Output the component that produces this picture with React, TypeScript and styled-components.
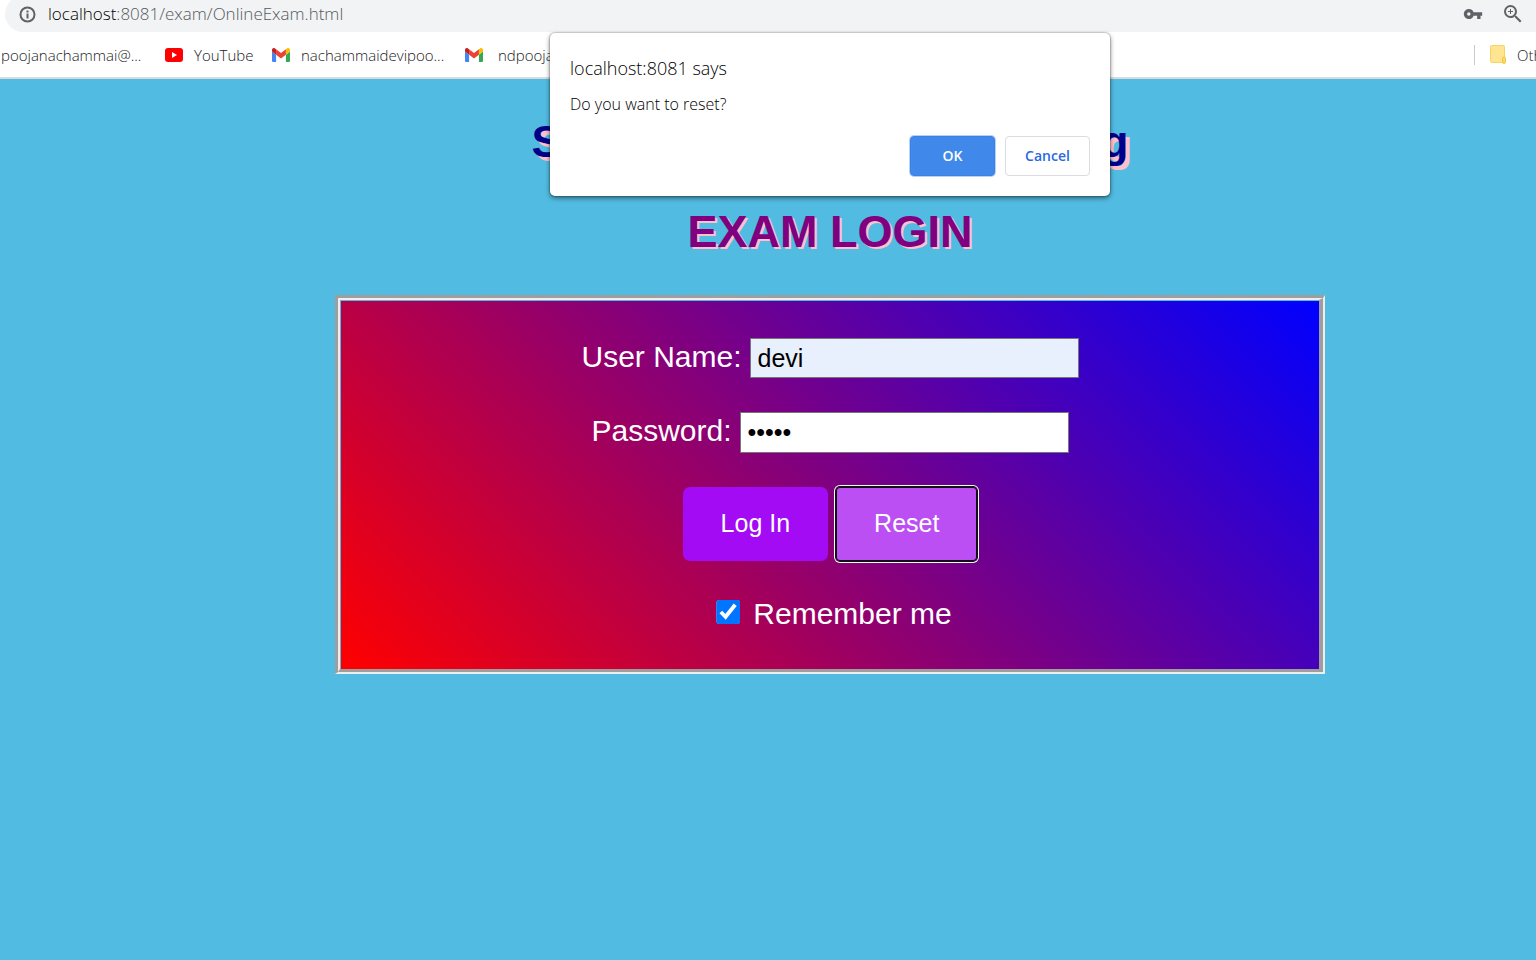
import React from "react";
import styled, { createGlobalStyle } from "styled-components";
import { MdVpnKey, MdZoomIn } from "react-icons/md";

const GlobalStyle = createGlobalStyle`
  * { box-sizing: border-box; }
  html, body, #root { height: 100%; }
  body { margin: 0; overflow: hidden; font-family: "Liberation Sans", Arial, sans-serif; }
`;

const chromeFont = `"Open Sans", "Noto Sans", sans-serif`;

const Window = styled.div`
  position: relative;
  min-height: 100%;
  display: flex;
  flex-direction: column;
  overflow: hidden;
  background: #fff;
`;

const AddressBar = styled.header`
  display: flex;
  align-items: center;
  height: 36px;
  margin: -4px 0 0 5px;
  padding: 0 11px 0 13px;
  border-radius: 18px 0 0 18px;
  background: #f1f3f4;
  color: #5f6368;
  font: 300 17px/20px ${chromeFont};
`;

const Url = styled.span`
  flex: 1;
  margin-left: 10px;
  color: #55595e;
  b { font-weight: 300; color: #000; }
`;

const IconButton = styled.button`
  display: flex;
  padding: 0;
  border: 0;
  background: none;
  color: #5f6368;
  & + & { margin-left: 18px; }
`;

const BookmarksBar = styled.nav`
  display: flex;
  align-items: center;
  height: 47px;
  padding-left: 1px;
  border-bottom: 2px solid #d8dadd;
  white-space: nowrap;
`;

const Bookmark = styled.a<{ $width: number; $gap?: number }>`
  display: flex;
  align-items: center;
  flex: none;
  gap: ${(p) => p.$gap ?? 11}px;
  width: ${(p) => p.$width}px;
  color: #202124;
  font: 300 15px/20px ${chromeFont};
  text-decoration: none;
  svg { flex: none; }
`;

const OtherBookmarks = styled.div`
  display: flex;
  flex: none;
  width: 62px;
  height: 20px;
  margin-left: auto;
  padding-left: 15px;
  border-left: 1px solid #c8cacd;
  overflow: hidden;
`;

const Page = styled.main`
  flex: 1;
  display: flex;
  flex-direction: column;
  align-items: center;
  padding: 37px 0 0 124px;
  background: #52bbe1;
`;

const Title = styled.h1`
  display: flex;
  justify-content: space-between;
  width: 597px;
  margin: 0;
  color: darkblue;
  font-size: 45px;
  line-height: 52px;
  text-shadow: 4px 4px pink;
`;

const Subtitle = styled.h2`
  margin: 38px 0 0;
  color: purple;
  font-size: 45px;
  line-height: 52px;
  text-shadow: 2px 2px pink;
`;

const Frame = styled.div`
  align-self: stretch;
  margin: 37px 211px 0;
  border: solid;
  border-width: 3px 2px 2px 3px;
  border-color: #9e9e9e #eee #eee #9e9e9e;
`;

const FrameInner = styled.div`
  padding: 1px 0 0 1px;
  border: solid;
  border-width: 2px 4px 3px 2px;
  border-color: #eee #9e9e9e #9e9e9e #eee;
`;

const LoginForm = styled.form`
  display: flex;
  flex-direction: column;
  align-items: center;
  padding: 37px 0 38px;
  background: linear-gradient(45deg, red, blue);
  color: #fff;
  font-size: 30px;
  line-height: 34px;
`;

const Field = styled.div`
  display: flex;
  gap: 8px;
  margin-bottom: 34px;
`;

const FieldLabel = styled.label`
  margin-top: 2px;
`;

const TextInput = styled.input<{ $filled?: boolean }>`
  width: 329px;
  height: ${(p) => (p.$filled ? 40 : 41)}px;
  padding: 0 7px;
  border: 1px solid #767676;
  background: ${(p) => (p.$filled ? "#e8f0fe" : "#fff")};
  color: #000;
  font: 25px "Liberation Sans", Arial, sans-serif;
  outline: 0;
`;

const Buttons = styled.div`
  display: flex;
  gap: 8px;
`;

const FormButton = styled.button<{ $focused?: boolean }>`
  height: 74px;
  padding: 0 38px 2px;
  border: 0;
  border-radius: ${(p) => (p.$focused ? 4 : 7)}px;
  background: ${(p) => (p.$focused ? "#bb4ff3" : "#a20bf3")};
  box-shadow: ${(p) =>
    p.$focused ? "inset 0 0 0 1px #101010, 0 0 0 1px #101010, 0 0 0 2px #fff" : "none"};
  color: #fff;
  font: 25px "Liberation Sans", Arial, sans-serif;
`;

const Remember = styled.label`
  display: flex;
  align-items: flex-start;
  gap: 13px;
  margin: 36px 0 0 8px;
`;

const Checkbox = styled.input`
  width: 24px;
  height: 24px;
  margin: 3px 0 0;
  accent-color: #0075ff;
  clip-path: inset(0 round 3px);
`;

const DialogLayer = styled.div`
  position: absolute;
  top: 33px;
  left: 124px;
  right: 0;
  display: flex;
  justify-content: center;
`;

const Dialog = styled.section`
  width: 560px;
  padding: 23px 20px 20px;
  border-radius: 5px;
  background: #fff;
  box-shadow: 0 0 1px 1px rgba(0, 0, 0, 0.16), 0 2px 5px rgba(0, 0, 0, 0.5);
  color: #000;
  font-family: ${chromeFont};
  font-weight: 300;
`;

const DialogTitle = styled.h2`
  margin: 0 0 13px;
  font-size: 18px;
  font-weight: 300;
  line-height: 24px;
`;

const DialogText = styled.p`
  margin: 0 0 21px;
  font-size: 16px;
  line-height: 22px;
`;

const DialogActions = styled.div`
  display: flex;
  justify-content: flex-end;
  gap: 10px;
`;

const DialogButton = styled.button<{ $primary?: boolean }>`
  width: 85px;
  height: 40px;
  padding: 0;
  border: 1px solid ${(p) => (p.$primary ? "#3b82e4" : "#dadce0")};
  border-radius: 4px;
  background: ${(p) => (p.$primary ? "#4089ea" : "#fff")};
  box-shadow: ${(p) => (p.$primary ? "0 0 0 1px #b7d2f8" : "none")};
  color: ${(p) => (p.$primary ? "#fff" : "#2a69dd")};
  font: 600 14px/20px ${chromeFont};
`;

const InfoIcon = () => (
  <svg width="20" height="20" viewBox="0 0 20 20" fill="none" stroke="currentColor" strokeWidth="2">
    <circle cx="9.500" cy="10.500" r="7" />
    <path d="M9.500 9.500v5M9.500 6.500v2" />
  </svg>
);

const YouTubeIcon = () => (
  <svg width="18" height="14" viewBox="0 0 18 14">
    <rect width="18" height="14" rx="3" fill="#f00" />
    <path d="M7 4v6l5-3z" fill="#fff" />
  </svg>
);

const GmailIcon = () => (
  <svg width="18" height="14" viewBox="52 42 88 66" preserveAspectRatio="none">
    <path fill="#4285f4" d="M58 108h14V74L52 59v43c0 3.320 2.690 6 6 6" />
    <path fill="#34a853" d="M120 108h14c3.320 0 6-2.690 6-6V59l-20 15" />
    <path fill="#fbbc04" d="M120 48v26l20-15v-8c0-7.420-8.470-11.650-14.400-7.200" />
    <path fill="#ea4335" d="M72 74V48l24 18 24-18v26L96 92" />
    <path fill="#c5221f" d="M52 51v8l20 15V48l-5.600-4.200c-5.940-4.450-14.400-.220-14.400 7.200" />
  </svg>
);

const FolderIcon = () => (
  <svg width="16" height="19" viewBox="0 0 16 19">
    <rect x="0.500" y="0.500" width="14" height="17" rx="1" fill="#ffe591" stroke="#f6d564" />
    <path d="M12.500 18V13.500a1.500 1.500 0 0 1 3 0V16.500a1.500 1.500 0 0 1-3 1z" fill="#fbdc63" stroke="#edc63f" />
  </svg>
);

export default function App() {
  return (
    <Window>
      <GlobalStyle />
      <AddressBar>
        <IconButton aria-label="Site information"><InfoIcon /></IconButton>
        <Url><b>localhost</b>:8081/exam/OnlineExam.html</Url>
        <IconButton aria-label="Passwords"><MdVpnKey size={20} /></IconButton>
        <IconButton aria-label="Zoom"><MdZoomIn size={24} /></IconButton>
      </AddressBar>
      <BookmarksBar>
        <Bookmark href="#" $width={164}>poojanachammai@...</Bookmark>
        <Bookmark href="#" $width={107}><YouTubeIcon />YouTube</Bookmark>
        <Bookmark href="#" $width={193}><GmailIcon />nachammaidevipoo...</Bookmark>
        <Bookmark href="#" $width={107} $gap={15}><GmailIcon />ndpooja</Bookmark>
        <OtherBookmarks>
          <Bookmark href="#" $width={150}><FolderIcon />Other bookmarks</Bookmark>
        </OtherBookmarks>
      </BookmarksBar>

      <Page>
        <Title><span>S</span><span>g</span></Title>
        <Subtitle>EXAM LOGIN</Subtitle>
        <Frame>
          <FrameInner>
            <LoginForm onSubmit={(e) => e.preventDefault()}>
              <Field>
                <FieldLabel htmlFor="username">User Name:</FieldLabel>
                <TextInput id="username" type="text" defaultValue="devi" $filled />
              </Field>
              <Field>
                <FieldLabel htmlFor="password">Password:</FieldLabel>
                <TextInput id="password" type="password" defaultValue="admin" />
              </Field>
              <Buttons>
                <FormButton type="submit">Log In</FormButton>
                <FormButton type="button" $focused>Reset</FormButton>
              </Buttons>
              <Remember>
                <Checkbox type="checkbox" defaultChecked />
                Remember me
              </Remember>
            </LoginForm>
          </FrameInner>
        </Frame>
      </Page>

      <DialogLayer>
        <Dialog role="dialog" aria-labelledby="dialog-title">
          <DialogTitle id="dialog-title">localhost:8081 says</DialogTitle>
          <DialogText>Do you want to reset?</DialogText>
          <DialogActions>
            <DialogButton $primary>OK</DialogButton>
            <DialogButton>Cancel</DialogButton>
          </DialogActions>
        </Dialog>
      </DialogLayer>
    </Window>
  );
}
